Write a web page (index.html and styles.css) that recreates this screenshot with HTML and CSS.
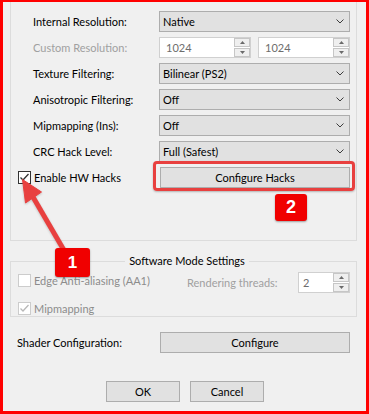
FILE: index.html
```html
<!DOCTYPE html>
<html>
<head>
<meta charset="utf-8">
<link rel="stylesheet" href="styles.css">
</head>
<body>
<div class="frame">
  <div class="group1">
    <div class="grid">
      <span class="lbl">Internal Resolution:</span>
      <div class="combo"><span>Native</span><svg class="chev" width="8" height="5" viewBox="0 0 8 5"><path d="M0.5 0.5 L4 4 L7.5 0.5"/></svg></div>

      <span class="lbl dis">Custom Resolution:</span>
      <div class="spins">
        <div class="spin"><span class="val">1024</span><span class="arrows"><span class="ab"><svg width="5" height="3" viewBox="0 0 5 3"><path d="M0 3 L2.5 0 L5 3Z"/></svg></span><span class="ab"><svg width="5" height="3" viewBox="0 0 5 3"><path d="M0 0 L2.5 3 L5 0Z"/></svg></span></span></div>
        <div class="spin"><span class="val">1024</span><span class="arrows"><span class="ab"><svg width="5" height="3" viewBox="0 0 5 3"><path d="M0 3 L2.5 0 L5 3Z"/></svg></span><span class="ab"><svg width="5" height="3" viewBox="0 0 5 3"><path d="M0 0 L2.5 3 L5 0Z"/></svg></span></span></div>
      </div>

      <span class="lbl">Texture Filtering:</span>
      <div class="combo"><span>Bilinear (PS2)</span><svg class="chev" width="8" height="5" viewBox="0 0 8 5"><path d="M0.5 0.5 L4 4 L7.5 0.5"/></svg></div>

      <span class="lbl">Anisotropic Filtering:</span>
      <div class="combo"><span>Off</span><svg class="chev" width="8" height="5" viewBox="0 0 8 5"><path d="M0.5 0.5 L4 4 L7.5 0.5"/></svg></div>

      <span class="lbl">Mipmapping (Ins):</span>
      <div class="combo"><span>Off</span><svg class="chev" width="8" height="5" viewBox="0 0 8 5"><path d="M0.5 0.5 L4 4 L7.5 0.5"/></svg></div>

      <span class="lbl">CRC Hack Level:</span>
      <div class="combo"><span>Full (Safest)</span><svg class="chev" width="8" height="5" viewBox="0 0 8 5"><path d="M0.5 0.5 L4 4 L7.5 0.5"/></svg></div>

      <label class="check"><span class="cb"><svg width="11" height="11" viewBox="0 0 11 11"><path d="M1.5 5.5 L4 8 L9.5 2"/></svg></span>Enable HW Hacks</label>
      <div class="btn hacks">Configure Hacks</div>
    </div>
  </div>

  <fieldset class="group2">
    <legend>Software Mode Settings</legend>
    <div class="sw-row">
      <label class="check dis top"><span class="cb"></span>Edge Anti-aliasing (AA1)</label>
      <span class="lbl-threads">Rendering threads:</span>
      <div class="spin"><span class="val">2</span><span class="arrows"><span class="ab"><svg width="5" height="3" viewBox="0 0 5 3"><path d="M0 3 L2.5 0 L5 3Z"/></svg></span><span class="ab"><svg width="5" height="3" viewBox="0 0 5 3"><path d="M0 0 L2.5 3 L5 0Z"/></svg></span></span></div>
    </div>
    <label class="check dis row2"><span class="cb"><svg width="11" height="11" viewBox="0 0 11 11"><path d="M1.5 5.5 L4 8 L9.5 2"/></svg></span>Mipmapping</label>
  </fieldset>

  <div class="shader-row">
    <span>Shader Configuration:</span>
    <div class="btn">Configure</div>
  </div>

  <div class="actions">
    <div class="btn dlg">OK</div>
    <div class="btn dlg">Cancel</div>
  </div>

  <div class="hl"></div>
  <svg class="arrow" width="369" height="414" viewBox="0 0 369 414">
    <line x1="65" y1="252" x2="33" y2="197" />
    <polygon points="22.5,179.5 41.5,192 25.5,203" />
  </svg>
  <div class="badge b1">1</div>
  <div class="badge b2">2</div>
</div>
</body>
</html>
```

FILE: styles.css
```css
* { box-sizing: border-box; }
html, body { margin: 0; padding: 0; }
body {
  font-family: "Segoe UI", Lato, "Noto Sans", sans-serif;
  font-size: 11px;
  color: #000;
  background: #f0f0f0;
}
.frame {
  position: relative;
  width: 369px;
  height: 414px;
  border-style: solid;
  border-color: #ff0000;
  border-width: 2px 3px 3px 3px;
  background: #f0f0f0;
  overflow: hidden;
}
.group1 {
  margin-left: 7px;
  width: 347px;
  height: 239px;
  border: 1px solid #dcdcdc;
  border-top: 0;
  padding: 9px 0 0 7px;
}
.grid {
  display: grid;
  grid-template-columns: 141px 191px;
  grid-auto-rows: 21px;
  row-gap: 5px;
}
.lbl {
  display: flex;
  align-items: center;
  padding-left: 15px;
  white-space: nowrap;
}
.dis { color: #a0a0a0; }
.combo {
  display: flex;
  align-items: center;
  justify-content: space-between;
  height: 21px;
  border: 1px solid #adadad;
  background: #e1e1e1;
  padding: 0 5px 0 3px;
  white-space: nowrap;
}
.chev path { fill: none; stroke: #3c3c3c; stroke-width: 1; }
.spins {
  display: flex;
  gap: 7px;
}
.spin {
  display: flex;
  width: 92px;
  height: 21px;
  border: 1px solid #d0d0d0;
  background: #ffffff;
}
.spin .val {
  flex: 1;
  display: flex;
  align-items: center;
  padding-left: 6px;
  color: #6d6d6d;
}
.arrows {
  display: flex;
  flex-direction: column;
  justify-content: space-between;
  width: 16px;
  padding: 0;
}
.ab {
  display: flex;
  align-items: center;
  justify-content: center;
  height: 9px;
  border: 1px solid #c6c6c6;
  background: #efefef;
}
.ab svg path { fill: #6a6a6a; }
.check {
  display: flex;
  align-items: center;
  white-space: nowrap;
}
.cb {
  display: flex;
  align-items: center;
  justify-content: center;
  width: 13px;
  height: 13px;
  border: 1px solid #333333;
  background: #ffffff;
  margin-right: 3px;
  flex: none;
}
.cb svg path { fill: none; stroke: #333333; stroke-width: 1.3; }
.check.dis .cb { border-color: #cccccc; }
.check.dis .cb svg path { stroke: #b8b8b8; }
.check.dis { color: #8c8c8c; }
.btn {
  display: flex;
  align-items: center;
  justify-content: center;
  height: 21px;
  border: 1px solid #adadad;
  background: #e1e1e1;
  white-space: nowrap;
}
.btn.hacks { margin-left: 1px; }

.group2 {
  margin: 12px 0 0 7px;
  width: 347px;
  min-width: 0;
  padding: 3px 0 1px 7px;
  border: 1px solid #dcdcdc;
}
.group2 legend {
  margin: 0 auto;
  padding: 0 4px;
  line-height: 16px;
}
.sw-row {
  display: grid;
  grid-template-columns: 169px 111px 52px;
  height: 21px;
}
.check.top { margin-top: 2px; height: 13px; align-self: start; }
.lbl-threads {
  display: flex;
  align-items: center;
  color: #a0a0a0;
}
.sw-row .spin { width: 52px; }
.sw-row .spin .val { padding-left: 4px; }
.check.row2 { margin-top: 9px; height: 13px; }

.shader-row {
  display: grid;
  grid-template-columns: 143px 190px;
  padding-left: 14px;
  margin-top: 15px;
  height: 21px;
}
.shader-row span { display: flex; align-items: center; }
.actions {
  display: flex;
  gap: 10px;
  padding-left: 103px;
  margin-top: 28px;
}
.btn.dlg { width: 74px; }

.hl {
  position: absolute;
  left: 150px;
  top: 159px;
  width: 202px;
  height: 30px;
  border: 3px solid #e8403f;
  border-radius: 4px;
  box-shadow: 0 1px 2px rgba(0,0,0,0.25);
}
.arrow {
  position: absolute;
  left: -3px;
  top: -2px;
  filter: drop-shadow(0 1px 1px rgba(0,0,0,0.2));
}
.arrow line { stroke: #e8403f; stroke-width: 5; }
.arrow polygon { fill: #e8403f; stroke: #e8403f; stroke-width: 1; stroke-linejoin: round; }
.badge {
  position: absolute;
  display: flex;
  align-items: center;
  justify-content: center;
  background: #f00000;
  color: #ffffff;
  font-family: "Liberation Sans", Arial, sans-serif;
  font-weight: bold;
  border-radius: 3px;
  box-shadow: 0 1px 2px rgba(0,0,0,0.35);
}
.b1 { left: 52px; top: 246px; width: 35px; height: 29px; font-size: 17px; }
.b2 { left: 272px; top: 192px; width: 32px; height: 27px; font-size: 18px; }
```
